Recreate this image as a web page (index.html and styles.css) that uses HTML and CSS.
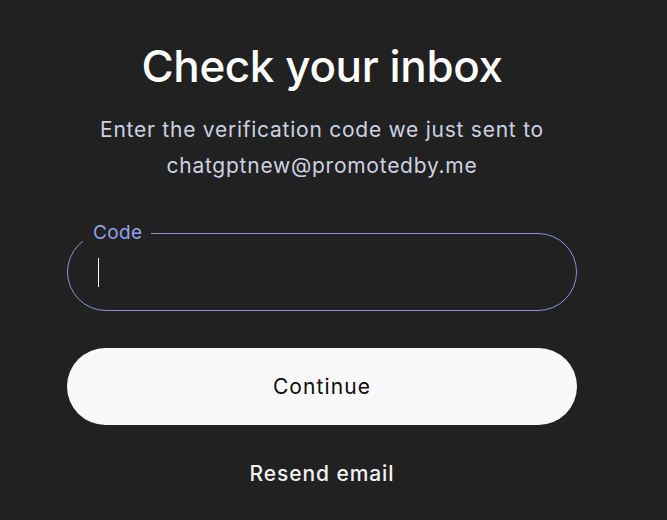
FILE: index.html
```html
<!DOCTYPE html>
<html>
<head>
    <meta charset="UTF-8">
    <title>Check your inbox</title>
    <link rel="stylesheet" href="styles.css">
</head>
<body>
    <div class="container">
        <h1 class="title">Check your inbox</h1>
        <p class="subtitle">Enter the verification code we just sent to chatgptnew@promotedby.me</p>

        <fieldset class="code-field">
            <legend>Code</legend>
            <span class="caret"></span>
        </fieldset>

        <button class="continue-btn">Continue</button>
        <button class="resend-btn">Resend email</button>
    </div>
</body>
</html>
```

FILE: styles.css
```css
body {
    margin: 0;
    background-color: #212121;
    font-family: Inter, "Noto Sans", sans-serif;
    color: #ececec;
}
.container {
    width: 510px;
    margin-left: 67px;
    display: flex;
    flex-direction: column;
    align-items: center;
}
.title {
    margin: 38px 0 0;
    font-size: 44px;
    font-weight: 500;
    line-height: 56px;
    color: #ffffff;
    letter-spacing: -0.4px;
}
.subtitle {
    margin: 18px 0 0;
    width: 480px;
    text-align: center;
    font-size: 21px;
    letter-spacing: 0.75px;
    line-height: 36px;
    color: #cdd2e2;
}
.code-field {
    box-sizing: border-box;
    width: 510px;
    height: 89px;
    margin: 38px 0 0;
    padding: 0 30px;
    border: 1px solid #8995da;
    border-radius: 39px;
}
.code-field legend {
    margin-left: -15px;
    padding: 0 8px 0 10px;
    font-size: 19px;
    letter-spacing: 0.4px;
    line-height: 22px;
    color: #93a0ea;
}
.caret {
    display: block;
    width: 1px;
    height: 29px;
    margin-top: 14px;
    background-color: #ffffff;
}
.continue-btn {
    width: 510px;
    height: 77px;
    margin-top: 37px;
    border: none;
    border-radius: 39px;
    background-color: #f9f9f9;
    color: #0d0d0d;
    font-family: inherit;
    font-size: 21px;
    letter-spacing: 1.1px;
}
.resend-btn {
    margin-top: 35px;
    border: none;
    background: none;
    color: #f2f2f2;
    font-family: inherit;
    font-size: 21px;
    font-weight: 500;
    letter-spacing: 0.9px;
}
```
